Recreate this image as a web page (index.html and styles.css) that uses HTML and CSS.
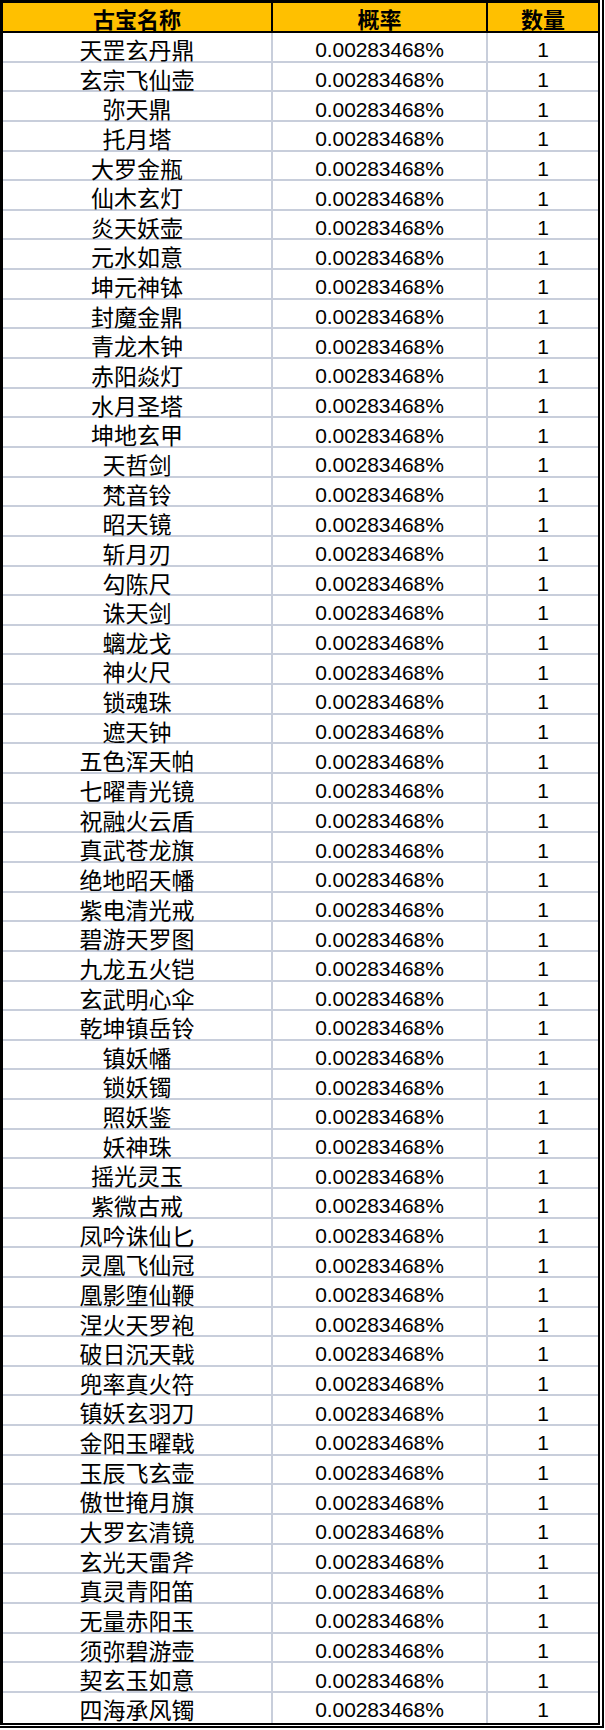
FILE: index.html
```html
<!DOCTYPE html>
<html lang="zh-CN">
<head>
<meta charset="utf-8">
<title>古宝概率</title>
<link rel="stylesheet" href="styles.css">
</head>
<body>
<div class="frame">
  <div class="sheet">
    <div class="row head"><div class="cell name">古宝名称</div><div class="cell prob">概率</div><div class="cell qty">数量</div></div>
    <div class="row"><div class="cell name">天罡玄丹鼎</div><div class="cell prob">0.00283468%</div><div class="cell qty">1</div></div>
    <div class="row"><div class="cell name">玄宗飞仙壶</div><div class="cell prob">0.00283468%</div><div class="cell qty">1</div></div>
    <div class="row"><div class="cell name">弥天鼎</div><div class="cell prob">0.00283468%</div><div class="cell qty">1</div></div>
    <div class="row"><div class="cell name">托月塔</div><div class="cell prob">0.00283468%</div><div class="cell qty">1</div></div>
    <div class="row"><div class="cell name">大罗金瓶</div><div class="cell prob">0.00283468%</div><div class="cell qty">1</div></div>
    <div class="row"><div class="cell name">仙木玄灯</div><div class="cell prob">0.00283468%</div><div class="cell qty">1</div></div>
    <div class="row"><div class="cell name">炎天妖壶</div><div class="cell prob">0.00283468%</div><div class="cell qty">1</div></div>
    <div class="row"><div class="cell name">元水如意</div><div class="cell prob">0.00283468%</div><div class="cell qty">1</div></div>
    <div class="row"><div class="cell name">坤元神钵</div><div class="cell prob">0.00283468%</div><div class="cell qty">1</div></div>
    <div class="row"><div class="cell name">封魔金鼎</div><div class="cell prob">0.00283468%</div><div class="cell qty">1</div></div>
    <div class="row"><div class="cell name">青龙木钟</div><div class="cell prob">0.00283468%</div><div class="cell qty">1</div></div>
    <div class="row"><div class="cell name">赤阳焱灯</div><div class="cell prob">0.00283468%</div><div class="cell qty">1</div></div>
    <div class="row"><div class="cell name">水月圣塔</div><div class="cell prob">0.00283468%</div><div class="cell qty">1</div></div>
    <div class="row"><div class="cell name">坤地玄甲</div><div class="cell prob">0.00283468%</div><div class="cell qty">1</div></div>
    <div class="row"><div class="cell name">天哲剑</div><div class="cell prob">0.00283468%</div><div class="cell qty">1</div></div>
    <div class="row"><div class="cell name">梵音铃</div><div class="cell prob">0.00283468%</div><div class="cell qty">1</div></div>
    <div class="row"><div class="cell name">昭天镜</div><div class="cell prob">0.00283468%</div><div class="cell qty">1</div></div>
    <div class="row"><div class="cell name">斩月刃</div><div class="cell prob">0.00283468%</div><div class="cell qty">1</div></div>
    <div class="row"><div class="cell name">勾陈尺</div><div class="cell prob">0.00283468%</div><div class="cell qty">1</div></div>
    <div class="row"><div class="cell name">诛天剑</div><div class="cell prob">0.00283468%</div><div class="cell qty">1</div></div>
    <div class="row"><div class="cell name">螭龙戈</div><div class="cell prob">0.00283468%</div><div class="cell qty">1</div></div>
    <div class="row"><div class="cell name">神火尺</div><div class="cell prob">0.00283468%</div><div class="cell qty">1</div></div>
    <div class="row"><div class="cell name">锁魂珠</div><div class="cell prob">0.00283468%</div><div class="cell qty">1</div></div>
    <div class="row"><div class="cell name">遮天钟</div><div class="cell prob">0.00283468%</div><div class="cell qty">1</div></div>
    <div class="row"><div class="cell name">五色浑天帕</div><div class="cell prob">0.00283468%</div><div class="cell qty">1</div></div>
    <div class="row"><div class="cell name">七曜青光镜</div><div class="cell prob">0.00283468%</div><div class="cell qty">1</div></div>
    <div class="row"><div class="cell name">祝融火云盾</div><div class="cell prob">0.00283468%</div><div class="cell qty">1</div></div>
    <div class="row"><div class="cell name">真武苍龙旗</div><div class="cell prob">0.00283468%</div><div class="cell qty">1</div></div>
    <div class="row"><div class="cell name">绝地昭天幡</div><div class="cell prob">0.00283468%</div><div class="cell qty">1</div></div>
    <div class="row"><div class="cell name">紫电清光戒</div><div class="cell prob">0.00283468%</div><div class="cell qty">1</div></div>
    <div class="row"><div class="cell name">碧游天罗图</div><div class="cell prob">0.00283468%</div><div class="cell qty">1</div></div>
    <div class="row"><div class="cell name">九龙五火铠</div><div class="cell prob">0.00283468%</div><div class="cell qty">1</div></div>
    <div class="row"><div class="cell name">玄武明心伞</div><div class="cell prob">0.00283468%</div><div class="cell qty">1</div></div>
    <div class="row"><div class="cell name">乾坤镇岳铃</div><div class="cell prob">0.00283468%</div><div class="cell qty">1</div></div>
    <div class="row"><div class="cell name">镇妖幡</div><div class="cell prob">0.00283468%</div><div class="cell qty">1</div></div>
    <div class="row"><div class="cell name">锁妖镯</div><div class="cell prob">0.00283468%</div><div class="cell qty">1</div></div>
    <div class="row"><div class="cell name">照妖鉴</div><div class="cell prob">0.00283468%</div><div class="cell qty">1</div></div>
    <div class="row"><div class="cell name">妖神珠</div><div class="cell prob">0.00283468%</div><div class="cell qty">1</div></div>
    <div class="row"><div class="cell name">摇光灵玉</div><div class="cell prob">0.00283468%</div><div class="cell qty">1</div></div>
    <div class="row"><div class="cell name">紫微古戒</div><div class="cell prob">0.00283468%</div><div class="cell qty">1</div></div>
    <div class="row"><div class="cell name">凤吟诛仙匕</div><div class="cell prob">0.00283468%</div><div class="cell qty">1</div></div>
    <div class="row"><div class="cell name">灵凰飞仙冠</div><div class="cell prob">0.00283468%</div><div class="cell qty">1</div></div>
    <div class="row"><div class="cell name">凰影堕仙鞭</div><div class="cell prob">0.00283468%</div><div class="cell qty">1</div></div>
    <div class="row"><div class="cell name">涅火天罗袍</div><div class="cell prob">0.00283468%</div><div class="cell qty">1</div></div>
    <div class="row"><div class="cell name">破日沉天戟</div><div class="cell prob">0.00283468%</div><div class="cell qty">1</div></div>
    <div class="row"><div class="cell name">兜率真火符</div><div class="cell prob">0.00283468%</div><div class="cell qty">1</div></div>
    <div class="row"><div class="cell name">镇妖玄羽刀</div><div class="cell prob">0.00283468%</div><div class="cell qty">1</div></div>
    <div class="row"><div class="cell name">金阳玉曜戟</div><div class="cell prob">0.00283468%</div><div class="cell qty">1</div></div>
    <div class="row"><div class="cell name">玉辰飞玄壶</div><div class="cell prob">0.00283468%</div><div class="cell qty">1</div></div>
    <div class="row"><div class="cell name">傲世掩月旗</div><div class="cell prob">0.00283468%</div><div class="cell qty">1</div></div>
    <div class="row"><div class="cell name">大罗玄清镜</div><div class="cell prob">0.00283468%</div><div class="cell qty">1</div></div>
    <div class="row"><div class="cell name">玄光天雷斧</div><div class="cell prob">0.00283468%</div><div class="cell qty">1</div></div>
    <div class="row"><div class="cell name">真灵青阳笛</div><div class="cell prob">0.00283468%</div><div class="cell qty">1</div></div>
    <div class="row"><div class="cell name">无量赤阳玉</div><div class="cell prob">0.00283468%</div><div class="cell qty">1</div></div>
    <div class="row"><div class="cell name">须弥碧游壶</div><div class="cell prob">0.00283468%</div><div class="cell qty">1</div></div>
    <div class="row"><div class="cell name">契玄玉如意</div><div class="cell prob">0.00283468%</div><div class="cell qty">1</div></div>
    <div class="row"><div class="cell name">四海承风镯</div><div class="cell prob">0.00283468%</div><div class="cell qty">1</div></div>
  </div>
</div>
</body>
</html>
```

FILE: styles.css
```css
html, body {
  margin: 0;
  padding: 0;
  background: #ffffff;
}

body {
  font-family: "Liberation Sans", "Noto Sans CJK SC", sans-serif;
  color: #000000;
}

.frame {
  width: 604px;
  box-sizing: border-box;
  padding: 0 2px 1.7px 0;
  border-right: 2px solid #000000;
  border-bottom: 2px solid #000000;
  background: #ffffff;
}

.sheet {
  width: 600px;
  box-sizing: border-box;
  border-top: 3px solid #000000;
  border-left: 3px solid #000000;
  border-right: 2px solid #000000;
  border-bottom: 2px solid #000000;
}

.row {
  display: grid;
  grid-template-columns: 270px 215px 110px;
  height: 29.655px;
  box-sizing: border-box;
  border-bottom: 2px solid #c8cedb;
}

.row:last-child {
  border-bottom: none;
}

.cell {
  box-sizing: border-box;
  text-align: center;
  white-space: nowrap;
  border-right: 2px solid #c8cedb;
}

.cell.qty {
  border-right: none;
}

.name {
  font-family: "Noto Sans CJK SC", sans-serif;
  font-size: 23px;
  line-height: 22px;
  padding-top: 5px;
}

.prob,
.qty {
  font-size: 21px;
  line-height: 21px;
  padding-top: 6.3px;
}

.prob {
  letter-spacing: -0.1px;
}

.row.head {
  height: 30px;
  background: #ffc000;
  border-bottom: 2px solid #000000;
}

.row.head .cell {
  font-family: "Noto Sans CJK SC", sans-serif;
  font-weight: 700;
  font-size: 22px;
  line-height: 24px;
  padding-top: 3px;
  letter-spacing: 0;
  border-right-color: #000000;
}

.row.head .cell.qty {
  border-right: none;
}
```
